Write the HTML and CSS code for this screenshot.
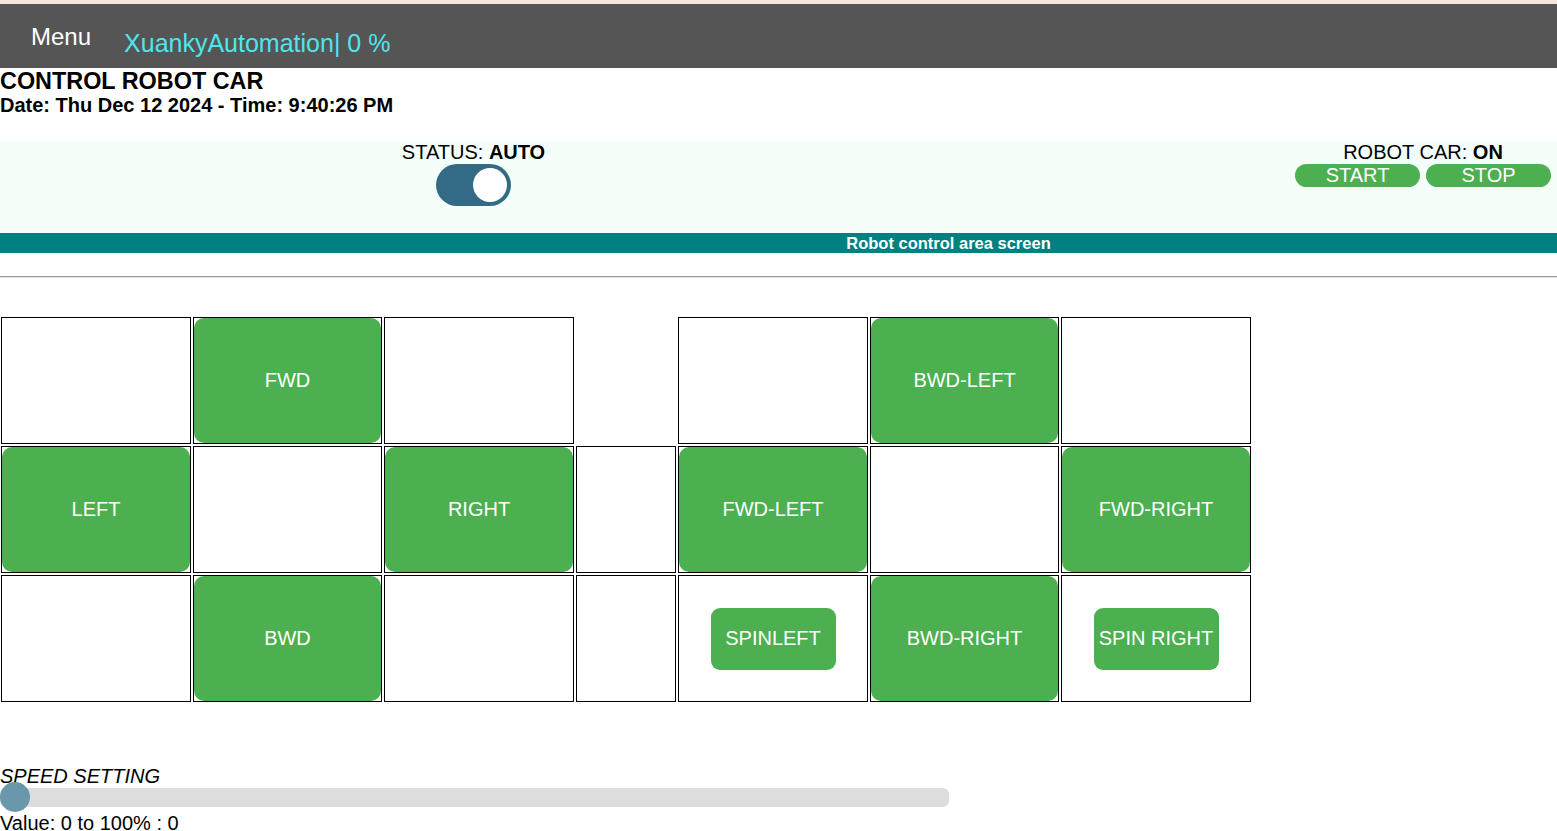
FILE: index.html
```html
<!DOCTYPE html>
<html>
<head>
<meta charset="utf-8">
<title>Control Robot Car</title>
<link rel="stylesheet" href="styles.css">
</head>
<body>
<div class="strip"></div>
<header class="topbar">
  <span class="menu">Menu</span>
  <span class="brand">XuankyAutomation| 0 %</span>
</header>
<h1 class="title">CONTROL ROBOT CAR</h1>
<div class="datetime">Date: Thu Dec 12 2024 - Time: 9:40:26 PM</div>

<section class="status-area">
  <div class="status">
    <div class="label">STATUS: <b>AUTO</b></div>
    <div class="toggle"><span class="knob"></span></div>
  </div>
  <div class="robot">
    <div class="label">ROBOT CAR: <b>ON</b></div>
    <div class="robot-btns">
      <button class="pill">START</button>
      <button class="pill">STOP</button>
    </div>
  </div>
</section>

<div class="banner">Robot control area screen</div>
<hr class="rule">

<div class="pad">
  <div class="cell"></div>
  <div class="cell"><button class="fill">FWD</button></div>
  <div class="cell"></div>
  <div class="cell spacer"></div>
  <div class="cell"></div>
  <div class="cell"><button class="fill">BWD-LEFT</button></div>
  <div class="cell"></div>

  <div class="cell"><button class="fill">LEFT</button></div>
  <div class="cell"></div>
  <div class="cell"><button class="fill">RIGHT</button></div>
  <div class="cell"></div>
  <div class="cell"><button class="fill">FWD-LEFT</button></div>
  <div class="cell"></div>
  <div class="cell"><button class="fill">FWD-RIGHT</button></div>

  <div class="cell"></div>
  <div class="cell"><button class="fill">BWD</button></div>
  <div class="cell"></div>
  <div class="cell"></div>
  <div class="cell center"><button class="small">SPINLEFT</button></div>
  <div class="cell"><button class="fill">BWD-RIGHT</button></div>
  <div class="cell center"><button class="small">SPIN RIGHT</button></div>
</div>

<section class="speed">
  <div class="speed-label">SPEED SETTING</div>
  <div class="track"><span class="thumb"></span></div>
  <div class="value">Value: 0 to 100% : 0</div>
</section>
</body>
</html>
```
FILE: styles.css
```css
html, body {
  margin: 0;
  padding: 0;
  background: #ffffff;
  font-family: "Liberation Sans", Arial, sans-serif;
  color: #000;
}

.strip {
  height: 4px;
  background: #f5e3dc;
}

.topbar {
  height: 64px;
  background: #555555;
  display: flex;
  align-items: flex-start;
}

.menu {
  color: #ffffff;
  font-size: 24px;
  line-height: 28px;
  margin-top: 19px;
  margin-left: 31px;
}

.brand {
  color: #4ee6ee;
  font-size: 25px;
  line-height: 28px;
  margin-top: 25px;
  margin-left: 33px;
}

.title {
  margin: 0;
  font-size: 23.4px;
  line-height: 26px;
  font-weight: bold;
}

.datetime {
  font-size: 20px;
  line-height: 23px;
  font-weight: bold;
}

.status-area {
  margin-top: 24px;
  height: 92px;
  background: #f5fffa;
  display: flex;
  justify-content: space-between;
  align-items: flex-start;
  padding-left: 402px;
  padding-right: 6px;
}

.label {
  font-size: 20px;
  line-height: 22px;
  text-align: center;
  white-space: nowrap;
}

.status {
  display: flex;
  flex-direction: column;
  align-items: center;
  width: 143px;
}

.toggle {
  margin-top: 1px;
  width: 75px;
  height: 42px;
  border-radius: 21px;
  background: #336b87;
  position: relative;
}

.knob {
  position: absolute;
  top: 4px;
  left: 37px;
  width: 34px;
  height: 34px;
  border-radius: 50%;
  background: #ffffff;
}

.robot {
  width: 256px;
  display: flex;
  flex-direction: column;
  align-items: center;
}

.robot-btns {
  margin-top: 1px;
  display: flex;
  gap: 6px;
}

.pill {
  width: 125px;
  height: 23px;
  border: none;
  border-radius: 12px;
  background: #4caf50;
  color: #ffffff;
  font-family: "Liberation Sans", Arial, sans-serif;
  font-size: 20px;
  line-height: 23px;
  padding: 0;
}

.banner {
  height: 20px;
  background: #008080;
  color: #ffffff;
  font-size: 16.5px;
  font-weight: bold;
  line-height: 20px;
  text-align: center;
  padding-left: 340px;
}

.rule {
  margin: 23px 0 0 0;
  border: none;
  border-top: 1px solid #9a9a9a;
  border-bottom: 1px solid #e4e4e4;
  height: 0;
}

.pad {
  margin-top: 39px;
  margin-left: 1px;
  display: grid;
  grid-template-columns: 190px 189px 190px 100px 190px 189px 190px;
  grid-template-rows: 127px 127px 127px;
  gap: 2px;
  width: max-content;
}

.cell {
  box-sizing: border-box;
  border: 1px solid #000;
  display: flex;
}

.cell.spacer {
  border-color: transparent;
}

.cell.center {
  align-items: center;
  justify-content: center;
}

.fill {
  flex: 1;
  border: none;
  border-radius: 10px;
  background: #4caf50;
  color: #ffffff;
  font-family: "Liberation Sans", Arial, sans-serif;
  font-size: 20px;
  padding: 0;
}

.small {
  width: 125px;
  height: 62px;
  border: none;
  border-radius: 9px;
  background: #4caf50;
  color: #ffffff;
  font-family: "Liberation Sans", Arial, sans-serif;
  font-size: 20px;
  padding: 0;
  white-space: nowrap;
}

.speed {
  margin-top: 63px;
}

.speed-label {
  font-size: 20px;
  line-height: 22px;
  font-style: italic;
  height: 23px;
}

.track {
  width: 949px;
  height: 19px;
  background: #dddddd;
  border-radius: 6px;
  position: relative;
}

.thumb {
  position: absolute;
  left: 0;
  top: -6px;
  width: 30px;
  height: 30px;
  border-radius: 50%;
  background: #6a97ab;
}

.value {
  margin-top: 5px;
  font-size: 20px;
  line-height: 22px;
}
```
